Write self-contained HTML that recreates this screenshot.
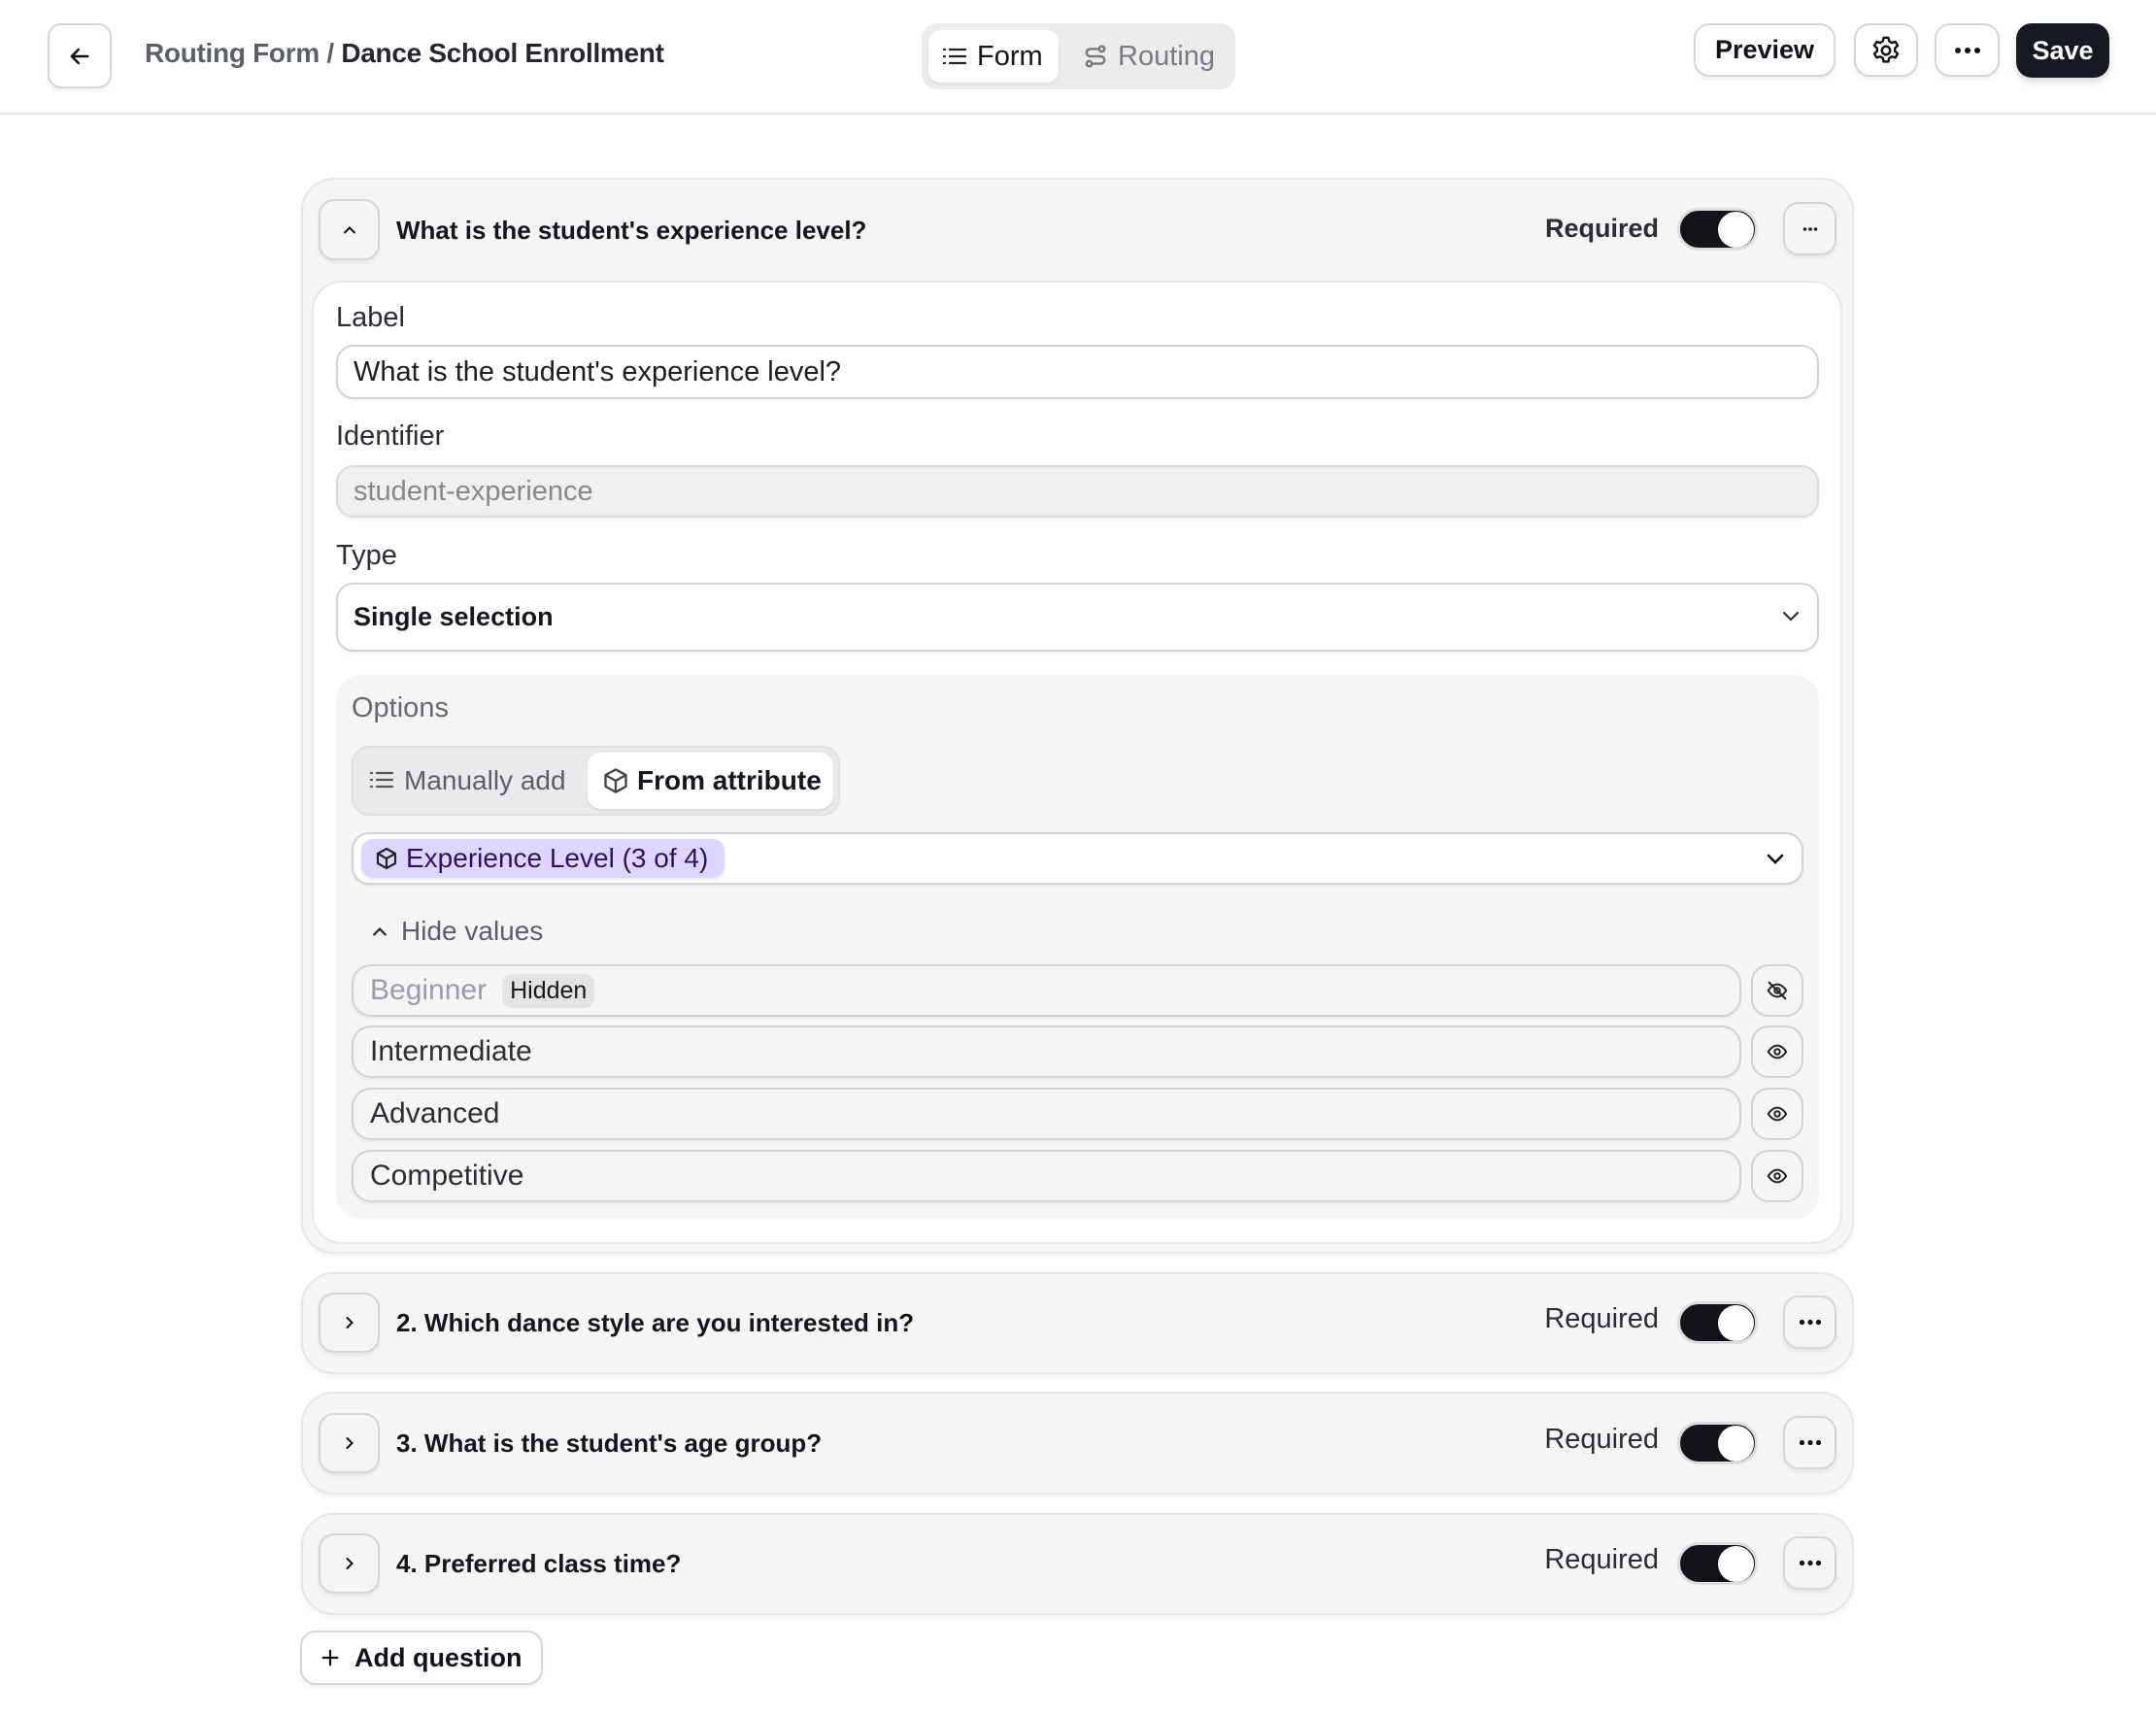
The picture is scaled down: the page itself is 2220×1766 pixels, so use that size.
<!DOCTYPE html>
<html><head><meta charset="utf-8"><style>
*{box-sizing:border-box;margin:0;padding:0}
body{width:2220px;height:1766px;background:#fff;font-family:"Liberation Sans",sans-serif;color:#111318;position:relative;overflow:hidden}
.a{position:absolute}
.btn{position:absolute;background:#fff;border:2px solid #d6d6d6;border-radius:16px;box-shadow:0 3px 4px rgba(0,0,0,.06);display:flex;align-items:center;justify-content:center}
.card{position:absolute;left:310px;width:1599px;background:#f5f5f5;border:2px solid #e6e6e6;border-radius:34px;box-shadow:0 3px 4px rgba(0,0,0,.05)}
.lbl{position:absolute;font-size:29px;color:#2a2d33}
.inp{position:absolute;border:2px solid #d2d2d2;border-radius:18px;font-size:29px;display:flex;align-items:center;padding-left:16px;box-shadow:0 2px 3px rgba(0,0,0,.05)}
.tog{position:absolute;width:83px;height:44px;border-radius:22px;background:#121419;border:3px solid #ddd}
.tog:after{content:"";position:absolute;right:1px;top:1px;width:37px;height:37px;border-radius:50%;background:#fff}
.req{position:absolute;font-size:29px;color:#2a2d33;text-align:right}
.q{position:absolute;left:408px;font-size:26px;font-weight:bold;color:#14161b}
.row{position:absolute;left:362px;width:1431px;height:54px;background:#f5f5f5;border:2px solid #d2d2d2;border-radius:20px;font-size:30px;color:#2b2e33;display:flex;align-items:center;padding-left:17px;box-shadow:0 2px 3px rgba(0,0,0,.05)}
.eye{position:absolute;left:1803px;width:54px;height:54px;background:#f5f5f5;border:2px solid #d2d2d2;border-radius:18px;display:flex;align-items:center;justify-content:center}
</style></head><body>
<!-- header -->
<div class="btn" style="left:49px;top:24px;width:66px;height:67px;border-radius:14px">
<svg width="28" height="28" viewBox="0 0 24 24" fill="none" stroke="#111" stroke-width="2.2" stroke-linecap="round" stroke-linejoin="round"><path d="M19 12H5M11 6l-6 6 6 6"/></svg></div>
<div class="a" style="left:149px;top:39px;font-size:28px;font-weight:bold;letter-spacing:-0.3px;color:#5b5f68">Routing Form / <span style="color:#24272d">Dance School Enrollment</span></div>
<div class="a" style="left:949px;top:24px;width:323px;height:68px;background:#ececec;border-radius:16px"></div>
<div class="a" style="left:956px;top:31px;width:134px;height:54px;background:#fff;border-radius:12px;box-shadow:0 2px 3px rgba(0,0,0,.08)"></div>
<svg class="a" style="left:970px;top:46px" width="26" height="24" viewBox="0 0 26 24" fill="none" stroke="#222" stroke-width="2.2" stroke-linecap="round"><path d="M8 5h16M8 12h16M8 19h16M2 5h1M2 12h1M2 19h1"/></svg>
<div class="a" style="left:1006px;top:42px;font-size:29px;color:#14161b">Form</div>
<svg class="a" style="left:1115px;top:44px" width="26" height="28" viewBox="0 0 24 24" fill="none" stroke="#777" stroke-width="2.2" stroke-linecap="round"><circle cx="6" cy="19" r="2.5"/><circle cx="18" cy="5" r="2.5"/><path d="M8.5 19H17a3.5 3.5 0 0 0 0-7H7a3.5 3.5 0 0 1 0-7h8.5"/></svg>
<div class="a" style="left:1151px;top:42px;font-size:29px;color:#777b82">Routing</div>
<div class="btn" style="left:1744px;top:24px;width:146px;height:55px;font-size:27px;font-weight:bold">Preview</div>
<div class="btn" style="left:1909px;top:24px;width:66px;height:55px">
<svg width="34" height="34" viewBox="0 0 24 24" fill="none" stroke="#111" stroke-width="1.7" stroke-linejoin="round"><path d="M10.3 2.7h3.4l.6 2.6 1.9 1.1 2.6-.8 1.7 2.9-2 1.8v2.2l2 1.8-1.7 2.9-2.6-.8-1.9 1.1-.6 2.6h-3.4l-.6-2.6-1.9-1.1-2.6.8-1.7-2.9 2-1.8v-2.2l-2-1.8 1.7-2.9 2.6.8 1.9-1.1z"/><circle cx="12" cy="12" r="3"/></svg></div>
<div class="btn" style="left:1992px;top:24px;width:67px;height:55px"><svg width="28" height="8" viewBox="0 0 28 8" fill="#111"><circle cx="4" cy="4" r="3"/><circle cx="14" cy="4" r="3"/><circle cx="24" cy="4" r="3"/></svg></div>
<div class="a" style="left:2076px;top:24px;width:96px;height:56px;background:#161920;border-radius:16px;color:#fff;font-size:27px;font-weight:bold;display:flex;align-items:center;justify-content:center;box-shadow:0 4px 8px rgba(0,0,0,.15)">Save</div>
<div class="a" style="left:0;top:116px;width:2220px;height:2px;background:#e8e8e8"></div>

<!-- card 1 -->
<div class="card" style="top:183px;height:1108px"></div>
<div class="btn" style="left:328px;top:205px;width:63px;height:63px;background:#f5f5f5">
<svg width="20" height="20" viewBox="0 0 24 24" fill="none" stroke="#111" stroke-width="2.4" stroke-linecap="round"><path d="M6 15l6-6 6 6"/></svg></div>
<div class="q" style="top:222px">What is the student's experience level?</div>
<div class="req" style="left:1560px;width:148px;top:220px;font-size:27px;font-weight:bold">Required</div>
<div class="tog" style="left:1727px;top:214px"></div>
<div class="btn" style="left:1836px;top:208px;width:55px;height:55px;background:#f5f5f5"><svg width="16" height="6" viewBox="0 0 16 6" fill="#222"><circle cx="2.5" cy="3" r="1.8"/><circle cx="8" cy="3" r="1.8"/><circle cx="13.5" cy="3" r="1.8"/></svg></div>
<div class="a" style="left:321px;top:289px;width:1576px;height:992px;background:#fff;border:2px solid #e8e8e8;border-radius:31px"></div>
<div class="lbl" style="left:346px;top:311px">Label</div>
<div class="inp" style="left:346px;top:355px;width:1527px;height:56px;background:#fff;color:#1b1d22">What is the student's experience level?</div>
<div class="lbl" style="left:346px;top:433px">Identifier</div>
<div class="inp" style="left:346px;top:479px;width:1527px;height:54px;background:#f0f0f0;color:#888;border-color:#dcdcdc">student-experience</div>
<div class="lbl" style="left:346px;top:556px">Type</div>
<div class="inp" style="left:346px;top:600px;width:1527px;height:71px;background:#fff;font-size:27px;font-weight:bold;color:#16181d">Single selection</div>
<svg class="a" style="left:1832px;top:625px" width="24" height="20" viewBox="0 0 24 20" fill="none" stroke="#333" stroke-width="2.2" stroke-linecap="round"><path d="M5 6l7 7 7-7"/></svg>

<div class="a" style="left:346px;top:695px;width:1527px;height:560px;background:#f5f5f5;border-radius:26px"></div>
<div class="lbl" style="left:362px;top:713px;color:#666a70">Options</div>
<div class="a" style="left:362px;top:768px;width:503px;height:72px;background:#eaeaec;border:2px solid #e0e0e2;border-radius:18px"></div>
<svg class="a" style="left:380px;top:792px" width="26" height="22" viewBox="0 0 26 22" fill="none" stroke="#555" stroke-width="2.2" stroke-linecap="round"><path d="M8 4h16M8 11h16M8 18h16M2 4h1M2 11h1M2 18h1"/></svg>
<div class="a" style="left:416px;top:788px;font-size:28px;color:#5b5f66">Manually add</div>
<div class="a" style="left:605px;top:775px;width:253px;height:58px;background:#fff;border-radius:14px;box-shadow:0 2px 3px rgba(0,0,0,.08)"></div>
<svg class="a" style="left:620px;top:789px" width="28" height="30" viewBox="0 0 24 24" fill="none" stroke="#444" stroke-width="2" stroke-linejoin="round"><path d="M12 2l9 5v10l-9 5-9-5V7z"/><path d="M3 7l9 5 9-5M12 12v10"/></svg>
<div class="a" style="left:656px;top:788px;font-size:28px;font-weight:bold;color:#16181d">From attribute</div>
<div class="inp" style="left:362px;top:857px;width:1495px;height:54px;background:#fff"></div>
<div class="a" style="left:372px;top:864px;width:374px;height:40px;background:#ddd6fe;border-radius:12px;box-shadow:0 2px 3px rgba(0,0,0,.08)"></div>
<svg class="a" style="left:386px;top:871px" width="24" height="26" viewBox="0 0 24 24" fill="none" stroke="#222" stroke-width="2.2" stroke-linejoin="round"><path d="M12 2l9 5v10l-9 5-9-5V7z"/><path d="M3 7l9 5 9-5M12 12v10"/></svg>
<div class="a" style="left:418px;top:868px;font-size:28px;color:#2e1065">Experience Level (3 of 4)</div>
<svg class="a" style="left:1816px;top:875px" width="24" height="20" viewBox="0 0 24 20" fill="none" stroke="#111" stroke-width="2.6" stroke-linecap="round"><path d="M5 6l7 7 7-7"/></svg>
<svg class="a" style="left:381px;top:950px" width="20" height="18" viewBox="0 0 24 20" fill="none" stroke="#222" stroke-width="2.6" stroke-linecap="round"><path d="M5 14l7-7 7 7"/></svg>
<div class="a" style="left:413px;top:943px;font-size:28px;color:#5b5f66">Hide values</div>

<div class="row" style="top:993px;color:#9a9da3">Beginner<span style="margin-left:16px;background:#e4e4e4;border-radius:10px;padding:3px 8px;font-size:25px;color:#16181d">Hidden</span></div>
<div class="eye" style="top:993px"><svg width="22" height="22" viewBox="0 0 24 24" fill="none" stroke="#222" stroke-width="2.2" stroke-linecap="round"><path d="M2 12s4-7 10-7 10 7 10 7-4 7-10 7S2 12 2 12z"/><circle cx="12" cy="12" r="3"/><path d="M3 3l18 18"/></svg></div>
<div class="row" style="top:1056px">Intermediate</div>
<div class="eye" style="top:1056px"><svg width="22" height="22" viewBox="0 0 24 24" fill="none" stroke="#222" stroke-width="2.2"><path d="M2 12s4-7 10-7 10 7 10 7-4 7-10 7S2 12 2 12z"/><circle cx="12" cy="12" r="3"/></svg></div>
<div class="row" style="top:1120px">Advanced</div>
<div class="eye" style="top:1120px"><svg width="22" height="22" viewBox="0 0 24 24" fill="none" stroke="#222" stroke-width="2.2"><path d="M2 12s4-7 10-7 10 7 10 7-4 7-10 7S2 12 2 12z"/><circle cx="12" cy="12" r="3"/></svg></div>
<div class="row" style="top:1184px">Competitive</div>
<div class="eye" style="top:1184px"><svg width="22" height="22" viewBox="0 0 24 24" fill="none" stroke="#222" stroke-width="2.2"><path d="M2 12s4-7 10-7 10 7 10 7-4 7-10 7S2 12 2 12z"/><circle cx="12" cy="12" r="3"/></svg></div>

<!-- collapsed cards -->
<div class="card" style="top:1310px;height:105px"></div>
<div class="btn" style="left:328px;top:1331px;width:63px;height:62px;background:#f5f5f5"><svg width="20" height="20" viewBox="0 0 24 24" fill="none" stroke="#111" stroke-width="2.4" stroke-linecap="round"><path d="M9 6l6 6-6 6"/></svg></div>
<div class="q" style="top:1347px">2. Which dance style are you interested in?</div>
<div class="req" style="left:1540px;width:168px;top:1342px">Required</div>
<div class="tog" style="left:1727px;top:1340px"></div>
<div class="btn" style="left:1836px;top:1334px;width:55px;height:55px;background:#f5f5f5"><svg width="24" height="7" viewBox="0 0 24 7" fill="#111"><circle cx="3.5" cy="3.5" r="2.6"/><circle cx="12" cy="3.5" r="2.6"/><circle cx="20.5" cy="3.5" r="2.6"/></svg></div>

<div class="card" style="top:1433px;height:106px"></div>
<div class="btn" style="left:328px;top:1455px;width:63px;height:62px;background:#f5f5f5"><svg width="20" height="20" viewBox="0 0 24 24" fill="none" stroke="#111" stroke-width="2.4" stroke-linecap="round"><path d="M9 6l6 6-6 6"/></svg></div>
<div class="q" style="top:1471px">3. What is the student's age group?</div>
<div class="req" style="left:1540px;width:168px;top:1466px">Required</div>
<div class="tog" style="left:1727px;top:1464px"></div>
<div class="btn" style="left:1836px;top:1458px;width:55px;height:55px;background:#f5f5f5"><svg width="24" height="7" viewBox="0 0 24 7" fill="#111"><circle cx="3.5" cy="3.5" r="2.6"/><circle cx="12" cy="3.5" r="2.6"/><circle cx="20.5" cy="3.5" r="2.6"/></svg></div>

<div class="card" style="top:1558px;height:105px"></div>
<div class="btn" style="left:328px;top:1579px;width:63px;height:62px;background:#f5f5f5"><svg width="20" height="20" viewBox="0 0 24 24" fill="none" stroke="#111" stroke-width="2.4" stroke-linecap="round"><path d="M9 6l6 6-6 6"/></svg></div>
<div class="q" style="top:1595px">4. Preferred class time?</div>
<div class="req" style="left:1540px;width:168px;top:1590px">Required</div>
<div class="tog" style="left:1727px;top:1588px"></div>
<div class="btn" style="left:1836px;top:1582px;width:55px;height:55px;background:#f5f5f5"><svg width="24" height="7" viewBox="0 0 24 7" fill="#111"><circle cx="3.5" cy="3.5" r="2.6"/><circle cx="12" cy="3.5" r="2.6"/><circle cx="20.5" cy="3.5" r="2.6"/></svg></div>

<div class="btn" style="left:309px;top:1679px;width:250px;height:56px;justify-content:flex-start;padding-left:18px;font-size:27px;font-weight:bold">
<svg width="22" height="22" viewBox="0 0 24 24" fill="none" stroke="#111" stroke-width="2.4" stroke-linecap="round" style="margin-right:14px"><path d="M12 4v16M4 12h16"/></svg>Add question</div>
</body></html>
